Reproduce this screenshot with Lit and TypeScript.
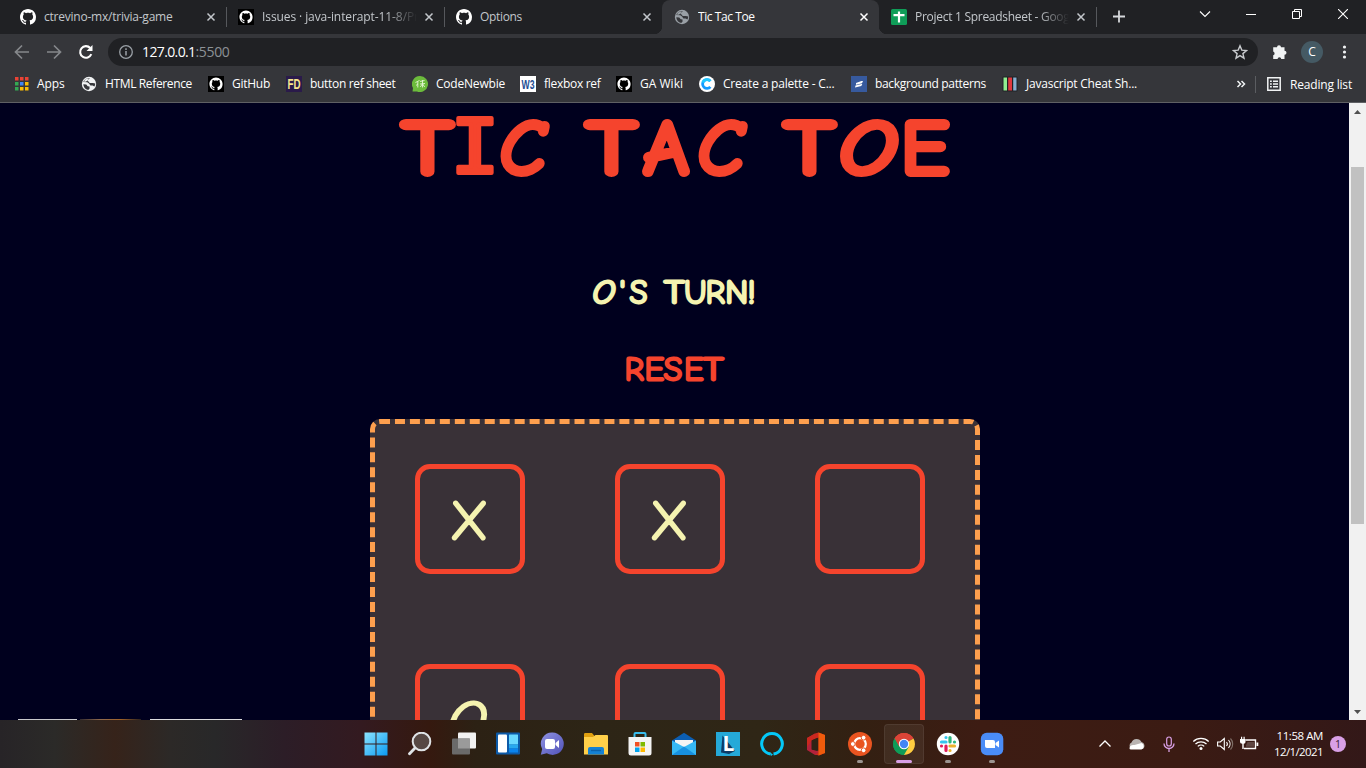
import { LitElement, html, svg, css } from "lit";
import { customElement } from "lit/decorators.js";

const ic = (w: number, body: unknown, h = w) =>
  html`<svg class="ic" width=${w} height=${h} viewBox="0 0 ${w} ${h}" fill="none">${body}</svg>`;

const CAT =
  "M8 0C3.58 0 0 3.58 0 8c0 3.54 2.29 6.53 5.47 7.59.4.07.55-.17.55-.38 0-.19-.01-.82-.01-1.49-2.01.37-2.53-.49-2.69-.94-.09-.23-.48-.94-.82-1.13-.28-.15-.68-.52-.01-.53.63-.01 1.08.58 1.23.82.72 1.21 1.87.87 2.33.66.07-.52.28-.87.51-1.07-1.78-.2-3.64-.89-3.64-3.95 0-.87.31-1.59.82-2.15-.08-.2-.36-1.02.08-2.12 0 0 .67-.21 2.2.82.64-.18 1.32-.27 2-.27s1.36.09 2 .27c1.53-1.04 2.2-.82 2.2-.82.44 1.1.16 1.92.08 2.12.51.56.82 1.27.82 2.15 0 3.07-1.87 3.75-3.65 3.95.29.25.54.73.54 1.48 0 1.07-.01 1.93-.01 2.2 0 .21.15.46.55.38A8.01 8.01 0 0 0 16 8c0-4.42-3.58-8-8-8z";

const github = () => ic(16, svg`<path d=${CAT} fill="#fff"/>`);
const githubBox = () =>
  ic(16, svg`<path d="M0 0h16v16H0z" fill="#000"/><g transform="translate(1.4 1.4) scale(.825)"><path d=${CAT} fill="#fff"/></g>`);
const globe = (c: string, bg: string) =>
  ic(16, svg`<circle cx="8" cy="8" r="7.200" fill=${c}/><path d="M8.700 2.200C8.500 3.400 6.600 3.200 6.600 4.600c0 1.200 1.800 1 1.900 2.300h3.300l2.500.6c0 1-.4 2.200-.9 3l-1.800-1H9.400L8 7.600 6.300 6.300 2.300 6c.5-1.900 2.500-3.900 6.400-3.800z" fill=${bg}/><path d="M6.600 4.600L4.600 5.800l-2-.3A6 6 0 0 1 7.500 2.200z" fill=${c}/><path d="M2.300 8.300l3 .3 1.400 1.600 1.800.3v2.300l-1.300 1.100A6 6 0 0 1 2.300 8.300z" fill=${bg}/>`);
const cross = (c: string) => ic(10, svg`<path d="M1.500 1.500l7 7M8.500 1.500l-7 7" stroke=${c} stroke-width="1.500"/>`);

const sheet = () =>
  ic(16, svg`<rect width="16" height="16" rx="1.500" fill="#0f9d58"/><path d="M8 2.500v11M2.500 6.200h11" stroke="#fff" stroke-width="2.200"/>`);
const apps = () => {
  const col = ["#ea4335", "#ea4335", "#ea4335", "#34a853", "#4285f4", "#fbbc05", "#34a853", "#fbbc05", "#fbbc05"];
  return ic(16, col.map((c, i) => svg`<rect x=${2 + (i % 3) * 5} y=${1 + Math.floor(i / 3) * 5} width="3.500" height="3.500" fill=${c}/>`));
};
const glyphIcon = (bg: string, fg: string, t: string, size: number) =>
  ic(16, svg`<path d="M0 0h16v16H0z" fill=${bg}/><text x="8" y="13" text-anchor="middle" textLength="13" lengthAdjust="spacingAndGlyphs" font-family="Liberation Sans" font-weight="700" font-size=${size} fill=${fg}>${t}</text>`);
const newbie = () =>
  ic(16, svg`<path d="M8 0a8 8 0 1 1-3 15.400H.5L1 12A8 8 0 0 1 8 0z" fill="#6cbb3c"/><path d="M3.500 6.500l4-2M5.800 6v5.500M4 9.500l2-1.700M8 5.500l4.500-1M8 8l5-.5M10.500 4v7.500M10.300 8l-2 3M10.700 8l2 3" stroke="#e4f5d4" stroke-width=".9"/>`);
const coolors = () =>
  ic(16, svg`<circle cx="8" cy="8" r="8" fill="#fff"/><path d="M11.400 5.200a4.400 4.400 0 1 0 0 5.600" stroke="#149bff" stroke-width="2.800"/><path d="M11.400 5.200a4.400 4.400 0 0 0-7.600 1.400" stroke="#20c8ff" stroke-width="2.800"/>`);
const patterns = () =>
  ic(16, svg`<path d="M0 0h16v16H0z" fill="#375a9e"/><path d="M5 7l5.500-2h1.500l-1 2.300L5 8.800zM4.500 9.500L10.500 8h.8l-1 2-6.300 1.500z" fill="#fff"/>`);
const cheat = () =>
  ic(16, svg`<rect x=".5" y=".5" width="15" height="15" rx="1" fill="#202124"/><path d="M1.500 1.500H5v13H1.500z" fill="#90ee90"/><path d="M6.200 1.500H10v13H6.200z" fill="#e0383e"/><path d="M11.200 1.500h3.300v13h-3.300z" fill="#86aed0"/>`);

type Tab = { x: number; icon: () => unknown; text: string; w: number; active?: boolean; fade?: boolean };
const TABS: Tab[] = [
  { x: 218, icon: github, text: "ctrevino-mx/trivia-game", w: 128.5 },
  { x: 218, icon: githubBox, text: "Issues · java-interapt-11-8/Pro", w: 164, fade: true },
  { x: 218, icon: github, text: "Options", w: 42 },
  { x: 217, icon: () => globe("#9aa0a6", "#35363a"), text: "Tic Tac Toe", w: 56.5, active: true },
  { x: 217, icon: sheet, text: "Project 1 Spreadsheet - Goog", w: 154.5, fade: true },
];

const MARKS: { x: number; next: number; icon: () => unknown; text: string; w: number }[] = [
  { x: 13, next: 81, icon: apps, text: "Apps", w: 27.5 },
  { x: 81, next: 208, icon: () => globe("#f1f3f4", "#35363a"), text: "HTML Reference", w: 87 },
  { x: 208, next: 286, icon: githubBox, text: "GitHub", w: 38 },
  { x: 286, next: 412, icon: () => glyphIcon("#2a1a4a", "#f6e58d", "FD", 14.5), text: "button ref sheet", w: 85.5 },
  { x: 412, next: 520, icon: newbie, text: "CodeNewbie", w: 69 },
  { x: 520, next: 616, icon: () => glyphIcon("#fff", "#1d4e94", "W3", 13), text: "flexbox ref", w: 56.5 },
  { x: 616, next: 699, icon: githubBox, text: "GA Wiki", w: 43 },
  { x: 699, next: 851, icon: coolors, text: "Create a palette - C...", w: 111.5 },
  { x: 851, next: 1002, icon: patterns, text: "background patterns", w: 111 },
  { x: 1002, next: 1150, icon: cheat, text: "Javascript Cheat Sh...", w: 111 },
];

const dockIcons = [
  svg`<defs><linearGradient id="w" x1="0" y1="0" x2="1" y2="1"><stop stop-color="#8ce4ff"/><stop offset="1" stop-color="#0a9af2"/></linearGradient></defs><path d="M.5.5h11v11H.5zM12.500.5h11v11h-11zM.5 12.500h11v11H.5zM12.500 12.500h11v11h-11z" fill="url(#w)"/>`,
  svg`<circle cx="13.500" cy="9.500" r="8.800" fill="#564844" stroke="#dfe3e6" stroke-width="2"/><path d="M7 16l-5.500 5.800" stroke="#dfe3e6" stroke-width="2.800" stroke-linecap="round"/>`,
  svg`<rect x="6" y=".5" width="18" height="16" rx="1" fill="#f2f2f2"/><rect x="0" y="6.500" width="18" height="16" rx="1" fill="#6a6a6a"/><path d="M6 6.500h12v10H6z" fill="#9a9a9a"/>`,
  svg`<rect y=".5" width="24" height="22" rx="1" fill="#0c5aa8"/><rect x="2" y="2.500" width="9" height="18" rx="1" fill="#fff"/><rect x="13" y="2.500" width="9" height="10" rx=".5" fill="#69d8ff"/><path d="M13 12.500h9v4h-9z" fill="#28a8ee"/><path d="M13 16.500h9v4h-9z" fill="#0a84ee"/>`,
  svg`<defs><linearGradient id="t" x1="0" y1="0" x2="1" y2="1"><stop stop-color="#8f92e2"/><stop offset="1" stop-color="#5152b8"/></linearGradient></defs><path d="M12.500.5a11.200 11.200 0 1 1-5.700 20.800L.8 22.700 2.200 17A11.200 11.200 0 0 1 12.500.5z" fill="url(#t)"/><rect x="5" y="7" width="10" height="10" rx="2" fill="#fff"/><path d="M15.500 11l3.500-3v8l-3.500-3z" fill="#fff"/>`,
  svg`<path d="M0 2.200Q0 1 1.200 1H8l2.500 3H24v18H0z" fill="#e0a010"/><path d="M0 5h9l2.500-2H23q1 0 1 1v18.500H0z" fill="#ffd04a"/><path d="M4 22.500V17q0-2 2-2h12q2 0 2 2v5.500z" fill="#1482d4"/><path d="M7 18.500h10" stroke="#0b62aa" stroke-width="1.400"/>`,
  svg`<path d="M6.500 6V2q0-1 1-1h9q1 0 1 1v4" stroke="#39bdee" stroke-width="2"/><path d="M.5 5h23v16q0 2.500-2.500 2.500H3Q.5 23.500.5 21z" fill="#f4f4f4"/><path d="M7 10h4.500v4.500H7z" fill="#f25022"/><path d="M12.500 10H17v4.500h-4.500z" fill="#7fba00"/><path d="M7 15.500h4.500V20H7z" fill="#00a4ef"/><path d="M12.500 15.500H17V20h-4.500z" fill="#ffb900"/>`,
  svg`<path d="M0 8.500L12 .8l12 7.700v4H0z" fill="#0c5eb2"/><path d="M3 8h18v7H3z" fill="#f4f4f4"/><path d="M0 8.500l12 6.500 12-6.500V23H0z" fill="#36b8f4"/><path d="M0 23l12-8.500L24 23z" fill="#1790e0"/>`,
  svg`<path d="M0 0h24v24H0z" fill="#25a9d8"/><path d="M6.500 3.500L5 20.500l8 1.500 6-3z" fill="#0d3b66"/><text x="6.500" y="18.500" font-family="Open Sans" font-size="21" font-weight="700" fill="#fff">L</text>`,
  svg`<path d="M10.500 22A10.300 10.300 0 1 1 13.500 22" stroke="#05c8f7" stroke-width="3"/><path d="M9.500 20l1.500 4 2-1.500z" fill="#05c8f7"/>`,
  svg`<path d="M3 6l8-4.500v5L8 8v9.500l8 1.500v3.500L11 23l-8-5z" fill="#b3223b"/><path d="M11 1.500L14.500.5 21 3v18l-6 2.500-4-1 3.500-2V5.500L8 8 3 15V6z" fill="#c9281f"/><path d="M14.500.5L21 3v18l-6.500 2.500z" fill="#ef5b0c"/><path d="M7.500 8.500l6-2.500v13l-6-1.500z" fill="#2e2315"/>`,
  svg`<circle cx="12" cy="12" r="12" fill="#e95420"/><circle cx="12" cy="12" r="5.800" stroke="#fff" stroke-width="2.200"/><g fill="#fff" stroke="#e95420" stroke-width="1"><circle cx="4.800" cy="12" r="2.400"/><circle cx="15.600" cy="5.700" r="2.400"/><circle cx="15.600" cy="18.300" r="2.400"/></g>`,
  svg`<path d="M12 12L2.500 6.500a11 11 0 0 1 19 0z" fill="#db4437"/><path d="M12 12V1 12l9.500-5.500a11 11 0 0 1-9.500 16.500z" fill="#ffcd40"/><path d="M12 12v11A11 11 0 0 1 2.500 6.500z" fill="#0f9d58"/><path d="M2.500 6.500A11 11 0 0 1 21.500 6.500H12L7 15z" fill="#db4437"/><path d="M7.200 14.700L2.500 6.500A11 11 0 0 0 12 23l4.800-8.300z" fill="#0f9d58"/><circle cx="12" cy="12" r="5.200" fill="#fff"/><circle cx="12" cy="12" r="4.200" fill="#4285f4"/>`,
  svg`<circle cx="12" cy="12" r="11.200" fill="#fff"/><g stroke-width="3.200" stroke-linecap="round"><path d="M10 5.500v0M5.500 10H10" stroke="#36c5f0"/><path d="M14 5.500V10M18.500 10v0" stroke="#2eb67d"/><path d="M14 14h4.500M14 18.500v0" stroke="#ecb22e"/><path d="M10 14v4.500M5.500 14v0" stroke="#e01e5a"/></g>`,
  svg`<rect x=".8" y=".8" width="22.500" height="22.500" rx="6" fill="#4a8cf7"/><path d="M5 8h8q2 0 2 2v6H7q-2 0-2-2z" fill="#fff"/><path d="M15.500 11l3.500-2.500v7L15.500 13z" fill="#fff"/>`,
];

// One hand-lettered glyph: character, left edge, horizontal stretch, extra class.
type Glyph = [string, number, number, string?];
const word = (cls: string, y: number, gs: Glyph[]) =>
  svg`<text class=${cls} y=${y}>${gs.map(([ch, x, s, c]) => svg`<tspan class=${"g " + (c ?? "")} x=${x} data-s=${s}>${ch}</tspan>`)}</text>`;

@customElement("app-root")
export class AppRoot extends LitElement {
  static styles = css`
    :host { display: block; width: 1366px; height: 768px; overflow: hidden; font: 12px "Open Sans", "Noto Sans", sans-serif; color: #fff; }
    * { box-sizing: border-box; }
    .screen { height: 768px; display: flex; flex-direction: column; background: #35363a; }
    .ic { display: block; flex: none; }
    .fit { white-space: pre; flex: none; }
    .strip { height: 34px; background: #202124; display: flex; padding-left: 8px; flex: none; }
    .tab { display: flex; align-items: center; height: 34px; padding: 0 10px 0 12px; color: #c3c7cb; position: relative; flex: none; }
    .tab.line::after { content: ""; position: absolute; right: -1px; top: 7px; width: 1px; height: 20px; background: #56585c; }
    .tab .name { flex: 1; margin: 0 7px 0 8px; overflow: hidden; line-height: 20px; height: 20px; display: flex; }
    .tab .fade { mask-image: linear-gradient(90deg, #000 80%, transparent 100%); }
    .tab.active { background: #35363a; border-radius: 8px 8px 0 0; color: #fff; }
    .tab.active::before { content: ""; position: absolute; left: -8px; right: -8px; bottom: 0; height: 8px; background: radial-gradient(circle at 0 0, transparent 8px, #35363a 8.500px) left / 8px 8px no-repeat, radial-gradient(circle at 100% 0, transparent 8px, #35363a 8.500px) right / 8px 8px no-repeat; }
    .plus { margin: 9px 0 0 16px; }
    .controls { margin-left: auto; display: flex; height: 28px; align-items: center; }
    .controls span { width: 46px; display: flex; justify-content: center; }
    .bar { height: 32px; margin-top: 2px; display: flex; align-items: center; flex: none; }
    .nav { width: 108px; padding-left: 14px; display: flex; gap: 16px; }
    .omni { width: 1150px; height: 28px; border-radius: 14px; background: #202124; display: flex; align-items: center; padding: 0 10px; font-size: 14px; }
    .url { margin-left: 8px; flex: 1; display: flex; line-height: 26px; }
    .port { color: #8d9296; }
    .tools { display: flex; align-items: center; padding-left: 14px; gap: 13px; }
    .avatar { width: 22px; height: 22px; border-radius: 50%; background: #455a64; text-align: center; font: 12px/22px "Open Sans"; }
    .marks { height: 35px; padding: 0 14px 2px 13px; display: flex; align-items: center; border-bottom: 1px solid #5f6064; flex: none; }
    .mark { display: flex; gap: 8px; align-items: center; line-height: 18px; }
    .more { margin-left: auto; padding-right: 9px; }
    .reading { border-left: 1px solid #5b5d61; padding-left: 11px; height: 17px; display: flex; gap: 9px; align-items: center; }
    .view { height: 617px; display: flex; flex: none; background: #00001e; }
    .page { width: 1349px; height: 617px; overflow: hidden; display: flex; flex-direction: column; align-items: center; position: relative; }
    .hand { display: block; flex: none; overflow: visible; }
    .hand text { font-family: "Comic Sans MS", "Comic Neue", "DejaVu Sans", sans-serif; font-weight: 200; stroke-linejoin: round; stroke-linecap: round; }
    .big { font-size: 74px; fill: #f5442d; stroke: #f5442d; stroke-width: 8px; }
    .slab { font-family: "DejaVu Sans Mono", monospace; stroke-width: 4px; }
    .slant { font-style: italic; }
    .turn { font-size: 31.500px; fill: #f5f3b0; stroke: #f5f3b0; stroke-width: 3px; }
    .reset { font-size: 31.500px; fill: #f5442d; stroke: #f5442d; stroke-width: 3px; }
    .mk { font-size: 54px; fill: #f5f3b0; stroke: #f5f3b0; stroke-width: 3px; }
    .status { margin: 77px 0 33px; }
    .board { margin-top: 28px; width: 610px; height: 610px; flex: none; border: 5px dashed #fd9f4e; border-radius: 10px; background: #393137; padding: 40px; display: grid; grid-template-columns: repeat(3, 110px); grid-auto-rows: 110px; gap: 90px; }
    .cell { border: 5px solid #f5442d; border-radius: 15px; }
    .peek { position: absolute; left: 18px; bottom: 0; display: flex; gap: 3px; height: 1px; }
    .peek i { width: 59px; background: #c8c8cc; }
    .peek i:nth-child(2) { width: 61px; background: linear-gradient(90deg, #332c30, #8f6a4e, #a06228, #2a2220); }
    .peek i:nth-child(3) { width: 92px; margin-left: 6px; background: #dcdcde; }
    .scroll { width: 17px; background: #f1f1f1; display: flex; flex-direction: column; align-items: center; justify-content: space-between; padding: 7px 0 6px; }
    .thumb { width: 13px; height: 357px; background: #c1c1c1; margin-bottom: 133px; }
    .task { height: 48px; display: flex; align-items: center; background: linear-gradient(90deg, #272427 0, #2b2a28 55px, #36231a 115px, #2c2927 170px, #282829 215px, #2c1d27 285px, #331a20 360px, #35190f 430px, #2c2114 475px, #2d2516 600px, #2f2616 760px, #332012 860px, #3d1c13 980px, #3b1b13 1180px, #331818 1366px); flex: none; }
    .dock { display: flex; margin-left: 356px; gap: 4px; }
    .slot { width: 40px; height: 40px; border-radius: 4px; display: flex; align-items: center; justify-content: center; position: relative; }
    .slot.on { background: #ffffff10; border: 1px solid #ffffff12; }
    .slot.run::after { content: ""; position: absolute; bottom: 1px; width: 6px; height: 3px; border-radius: 2px; background: #9c9490; }
    .slot.on::after { content: ""; position: absolute; bottom: 0; width: 16px; height: 3px; border-radius: 2px; background: #d9a0e6; }
    .tray { margin-left: auto; display: flex; align-items: center; padding-right: 20px; }
    .clock { display: flex; flex-direction: column; align-items: flex-end; width: 62px; line-height: 16px; font-size: 11.500px; }
    .badge { width: 16px; height: 16px; border-radius: 50%; background: #d9a0e6; color: #3a2030; font-size: 10.500px; line-height: 16px; text-align: center; margin-left: 7px; }
  `;

  // Spaces each label out to the width stored with it and stretches the lettering.
  firstUpdated() {
    this.renderRoot.querySelectorAll<HTMLElement>(".fit").forEach((el) => {
      const want = Number(el.dataset.w);
      const n = el.textContent!.length;
      el.style.letterSpacing = `${(want - el.getBoundingClientRect().width) / n}px`;
    });
    this.renderRoot.querySelectorAll<SVGTSpanElement>(".g").forEach((el) => {
      const s = Number(el.dataset.s);
      if (s === 1) return;
      const len = el.getComputedTextLength() * s;
      el.setAttribute("lengthAdjust", "spacingAndGlyphs");
      el.setAttribute("textLength", String(len));
    });
  }

  label(t: string, w: number, cls = "") {
    return html`<span class="fit ${cls}" data-w=${w}>${t}</span>`;
  }

  cellMark(m: string) {
    if (m === "X") return html`<svg class="hand" width="100" height="100">${word("mk", 69.5, [["X", 30.5, 1]])}</svg>`;
    if (m === "O") return html`<svg class="hand" width="100" height="100">${word("mk", 69.5, [["O", 27.5, 1.12, "slant"]])}</svg>`;
    return "";
  }

  render() {
    const cells = ["X", "X", "", "O", "", "", "", "", ""];
    return html`<div class="screen">
      <div class="strip">
        ${TABS.map((t, i) => html`<div class="tab ${t.active ? "active" : ""} ${i === 0 || i === 1 || i === 4 ? "line" : ""}" style="width:${t.x}px">
          ${t.icon()}<span class="name ${t.fade ? "fade" : ""}">${this.label(t.text, t.w)}</span>${cross(t.active ? "#fff" : "#c3c7cb")}</div>`)}
        <span class="plus">${ic(14, svg`<path d="M7 1.500v12M1 7.500h12" stroke="#d5d8db" stroke-width="1.800"/>`, 16)}</span>
        <div class="controls">
          <span>${ic(12, svg`<path d="M1 3.500l5 5 5-5" stroke="#fff" stroke-width="1.100"/>`)}</span>
          <span>${ic(10, svg`<path d="M0 5.500h10" stroke="#fff"/>`)}</span>
          <span>${ic(10, svg`<path d="M.5 2.500h7v7h-7zM2.500 2.500v-2h7v7h-2" stroke="#fff"/>`)}</span>
          <span>${ic(10, svg`<path d="M0 0l10 10M10 0L0 10" stroke="#fff" stroke-width="1.100"/>`)}</span>
        </div>
      </div>
      <div class="bar">
        <div class="nav">
          ${ic(16, svg`<path d="M15 8H2M8 1.500L1.500 8 8 14.500" stroke="#85888b" stroke-width="1.700"/>`)}
          ${ic(16, svg`<path d="M1 8h13M8 1.500L14.500 8 8 14.500" stroke="#85888b" stroke-width="1.700"/>`)}
          ${ic(16, svg`<path d="M13.300 10.200A5.800 5.800 0 1 1 12.200 4" stroke="#fff" stroke-width="2.100"/><path d="M14.500 1v6H8.500z" fill="#fff"/>`)}
        </div>
        <div class="omni">
          ${ic(16, svg`<circle cx="8" cy="8" r="6.300" stroke="#9aa0a6" stroke-width="1.300"/><path d="M8 7v4.500M8 4.300v1.600" stroke="#9aa0a6" stroke-width="1.500"/>`)}
          <span class="url">${this.label("127.0.0.1", 53.5)}${this.label(":5500", 34, "port")}</span>
          ${ic(16, svg`<path d="M8 1.800l1.800 4.300 4.700.4-3.600 3.100 1.100 4.600L8 11.700l-4 2.500 1.100-4.600L1.500 6.500l4.700-.4z" stroke="#c8cbce" stroke-width="1.400"/>`)}
        </div>
        <div class="tools">
          ${ic(16, svg`<path d="M5 3.200a2 2 0 0 1 4 0h3.500v3.600a2 2 0 0 1 0 4V15H9.200a1.800 1.800 0 0 0-3.600 0H1.200v-3.700a2 2 0 0 0 0-3.800V3.200z" fill="#f1f3f4"/>`)}
          <span class="avatar">C</span>
          ${ic(16, svg`<g fill="#f1f3f4"><circle cx="8.500" cy="3" r="1.600"/><circle cx="8.500" cy="8" r="1.600"/><circle cx="8.500" cy="13" r="1.600"/></g>`)}
        </div>
      </div>
      <div class="marks">
        ${MARKS.map((m) => html`<div class="mark" style="width:${m.next - m.x}px">${m.icon()}${this.label(m.text, m.w)}</div>`)}
        <span class="more">${ic(10, svg`<path d="M1.500 2l3 3-3 3M5.500 2l3 3-3 3" stroke="#f1f3f4" stroke-width="1.500"/>`)}</span>
        <div class="reading">${ic(14, svg`<path d="M.8.8h12.400v12.400H.8z" stroke="#f1f3f4" stroke-width="1.500"/><path d="M3 4.200h1.800M3 7h1.800M3 9.800h1.800M6 4.200h5M6 7h5M6 9.800h5" stroke="#f1f3f4" stroke-width="1.400"/>`)}${this.label("Reading list", 62)}</div>
      </div>
      <div class="view">
        <div class="page">
          <svg class="hand" width="561" height="90" viewBox="394 103 561 90">
            ${word("big", 173, [["T", 403.5, 1.27], ["I", 450.5, 1.1, "slab"], ["C", 500.5, 0.98, "slant"]])}
            ${word("big", 173, [["T", 587.5, 1.27], ["A", 644.5, 1.03], ["C", 698.5, 0.98, "slant"]])}
            ${word("big", 173, [["T", 785.5, 1.27], ["O", 839.5, 1.18, "slant"], ["E", 901, 1.04]])}
          </svg>
          <svg class="hand status" width="181" height="44" viewBox="584 270 181 44">
            ${word("turn", 302.5, [["O", 592.5, 1.1, "slant"], ["'", 619.5, 1], ["S", 630, 1]])}
            ${word("turn", 302.5, [["T", 664.5, 1.22], ["U", 684, 1], ["R", 705.5, 1], ["N", 725, 1.08], ["!", 747.5, 1]])}
          </svg>
          <svg class="hand" width="141" height="44" viewBox="604 347 141 44">
            ${word("reset", 379.5, [["R", 624.5, 1], ["E", 644.5, 1], ["S", 664, 1.05], ["E", 684, 1], ["T", 703.5, 1.22]])}
          </svg>
          <div class="board">${cells.map((c) => html`<div class="cell">${this.cellMark(c)}</div>`)}</div>
          <div class="peek"><i></i><i></i><i></i></div>
        </div>
        <div class="scroll">
          ${ic(7, svg`<path d="M0 4L3.500 0 7 4z" fill="#505050"/>`, 4)}
          <div class="thumb"></div>
          ${ic(7, svg`<path d="M0 0l3.500 4L7 0z" fill="#505050"/>`, 4)}
        </div>
      </div>
      <div class="task">
        <div class="dock">${dockIcons.map((d, i) => html`<div class="slot ${i === 12 ? "on" : i === 11 || i > 12 ? "run" : ""}">${ic(24, d)}</div>`)}</div>
        <div class="tray">
          ${ic(32, svg`<path d="M10.500 18.500l5.500-5.500 5.500 5.500" stroke="#fff" stroke-width="1.300"/>`)}
          ${ic(32, svg`<path d="M11 21a3.500 3.500 0 0 1-.5-6.500 5.500 5.500 0 0 1 10-.5 4 4 0 0 1 1.500 7z" fill="#b9b4b2"/><path d="M8.500 20.500q0-4 5-3.500l7-2a3.500 3.500 0 0 1 0 6.500H10q-1.500 0-1.500-1z" fill="#fff"/>`)}
          ${ic(32, svg`<rect x="13.700" y="9" width="4.600" height="9" rx="2.300" stroke="#d9a0e6" stroke-width="1.200"/><path d="M11 15.500a5 5 0 0 0 10 0M16 20.500V24" stroke="#d9a0e6" stroke-width="1.300"/>`)}
          ${ic(28, svg`<path d="M8.300 13.500a11 11 0 0 1 15.400 0M10.500 16a8 8 0 0 1 11 0M12.800 18.400a4.600 4.600 0 0 1 6.400 0" stroke="#fff" stroke-width="1.300"/><circle cx="16" cy="20.500" r="1.500" fill="#fff"/>`, 32)}
          ${ic(24, svg`<path d="M4.600 14h2.700l4-3.500v11l-4-3.500H4.600z" stroke="#fff" stroke-width="1.100"/><path d="M13.500 14a3 3 0 0 1 0 4M15.500 12a6 6 0 0 1 0 8" stroke="#fff" stroke-width="1.100"/><path d="M17.500 10.500a8 8 0 0 1 0 11" stroke="#807069" stroke-width="1.100"/>`, 32)}
          ${ic(24, svg`<path d="M8.500 12h10v8.500H7" stroke="#fff" stroke-width="1.400"/><path d="M10.500 14h6.500v4.800H9v-1.500z" fill="#fff3"/><path d="M19.500 14.500h1.800v3.500h-1.800zM3 11h5.500v3q0 1.500-1.800 1.800V21H5.300v-5.200Q3 15.500 3 14zM4 8.800h1.200V11H4zM6.500 8.800h1.200V11H6.500z" fill="#fff"/>`, 32)}
          <div class="clock">${this.label("11:58 AM", 46.5)}${this.label("12/1/2021", 49)}</div>
          <div class="badge">1</div>
        </div>
      </div>
    </div>`;
  }
}
